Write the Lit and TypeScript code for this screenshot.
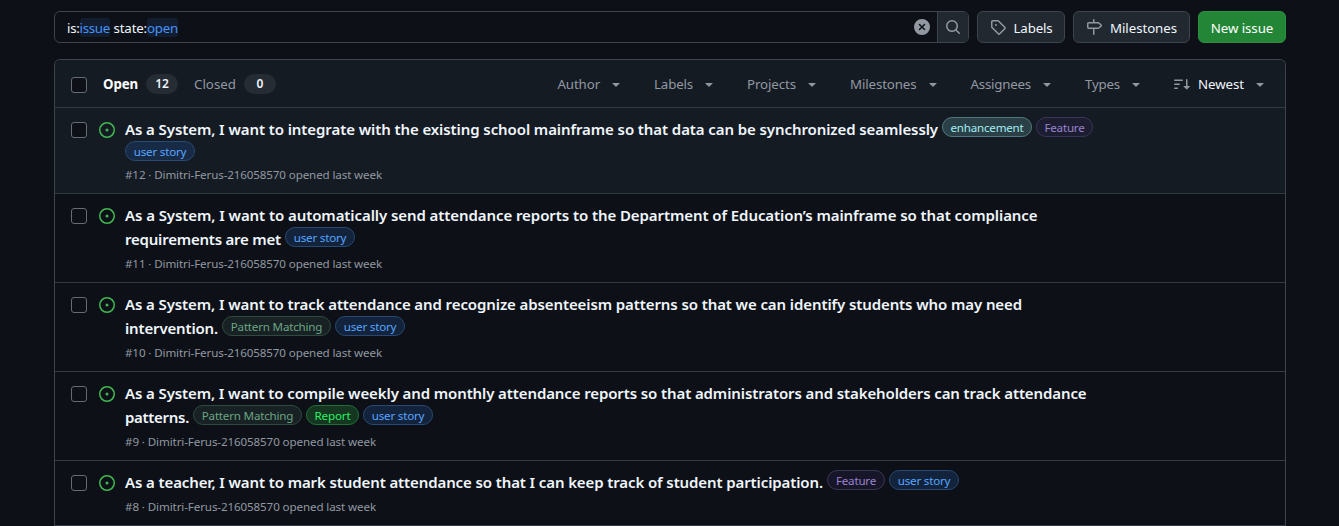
import { LitElement, html, css, svg, nothing } from "lit";
import { customElement, property } from "lit/decorators.js";

const ICONS = {
  tag: svg`<path d="M1 7.775V2.75C1 1.784 1.784 1 2.75 1h5.025c.464 0 .91.184 1.238.513l6.25 6.25a1.75 1.75 0 0 1 0 2.474l-5.026 5.026a1.75 1.75 0 0 1-2.474 0l-6.25-6.25A1.752 1.752 0 0 1 1 7.775Zm1.5 0c0 .066.026.13.073.177l6.25 6.25a.25.25 0 0 0 .354 0l5.025-5.025a.25.25 0 0 0 0-.354l-6.25-6.25a.25.25 0 0 0-.177-.073H2.75a.25.25 0 0 0-.25.25ZM6 5a1 1 0 1 1 0 2 1 1 0 0 1 0-2Z"/>`,
  milestone: svg`<path d="M7.75 0a.75.75 0 0 1 .75.75V3h3.634c.414 0 .814.147 1.13.414l2.07 1.75a1.75 1.75 0 0 1 0 2.672l-2.07 1.75a1.75 1.75 0 0 1-1.13.414H8.5v5.25a.75.75 0 0 1-1.5 0V10H2.75A1.75 1.75 0 0 1 1 8.25v-3.5C1 3.784 1.784 3 2.75 3H7V.75A.75.75 0 0 1 7.75 0Zm4.384 8.5a.25.25 0 0 0 .161-.06l2.07-1.75a.248.248 0 0 0 0-.38l-2.07-1.75a.25.25 0 0 0-.161-.06H2.75a.25.25 0 0 0-.25.25v3.5c0 .138.112.25.25.25h9.384Z"/>`,
  search: svg`<path d="M10.68 11.74a6 6 0 0 1-7.922-8.982 6 6 0 0 1 8.982 7.922l3.04 3.04a.749.749 0 0 1-.326 1.275.749.749 0 0 1-.734-.215ZM11.5 7a4.499 4.499 0 1 0-8.997 0A4.499 4.499 0 0 0 11.5 7Z"/>`,
  clear: svg`<path d="M2.343 13.657A8 8 0 1 1 13.658 2.343 8 8 0 0 1 2.343 13.657ZM6.03 4.97a.751.751 0 0 0-1.042.018.751.751 0 0 0-.018 1.042L6.94 8 4.97 9.97a.749.749 0 0 0 .326 1.275.749.749 0 0 0 .734-.215L8 9.06l1.97 1.97a.749.749 0 0 0 1.275-.326.749.749 0 0 0-.215-.734L9.06 8l1.97-1.97a.749.749 0 0 0-.326-1.275.749.749 0 0 0-.734.215L8 6.94Z"/>`,
  opened: svg`<path d="M8 9.5a1.5 1.5 0 1 0 0-3 1.5 1.5 0 0 0 0 3Z"/><path d="M8 0a8 8 0 1 1 0 16A8 8 0 0 1 8 0ZM1.5 8a6.5 6.5 0 1 0 13 0 6.5 6.5 0 0 0-13 0Z"/>`,
  caret: svg`<path d="m4.427 7.427 3.396 3.396a.25.25 0 0 0 .354 0l3.396-3.396A.25.25 0 0 0 11.396 7H4.604a.25.25 0 0 0-.177.427Z"/>`,
  sort: svg`<path d="M0 4.25a.75.75 0 0 1 .75-.75h7.5a.75.75 0 0 1 0 1.5H.75A.75.75 0 0 1 0 4.25Zm0 4a.75.75 0 0 1 .75-.75h4.5a.75.75 0 0 1 0 1.5H.75A.75.75 0 0 1 0 8.25Zm0 4a.75.75 0 0 1 .75-.75h2.5a.75.75 0 0 1 0 1.5H.75a.75.75 0 0 1-.75-.75Z"/><path d="M13.5 10h2.25a.25.25 0 0 1 .177.427l-3 3a.25.25 0 0 1-.354 0l-3-3A.25.25 0 0 1 9.75 10H12V3.75a.75.75 0 0 1 1.5 0V10Z"/>`,
};

const icon = (name: keyof typeof ICONS, extra = "") =>
  html`<svg class="icon ${extra}" viewBox="0 0 16 16" aria-hidden="true">${ICONS[name]}</svg>`;

/** One line of text whose tracking is adjusted so that it sets to a given width. */
@customElement("fit-text")
class FitText extends LitElement {
  static styles = css`
    :host {
      display: block;
      flex: none;
      white-space: pre;
    }
    .run {
      display: inline-block;
    }
  `;
  @property() text = "";
  @property({ type: Number }) width = 0;

  render() {
    return html`<span class="run">${this.text}</span>`;
  }

  updated() {
    const run = this.renderRoot.querySelector<HTMLElement>(".run")!;
    run.style.letterSpacing = "0px";
    const natural = run.getBoundingClientRect().width;
    run.style.letterSpacing = `${(this.width - natural) / this.text.length}px`;
    this.style.width = `${this.width}px`;
  }
}

const fit = (text: string, width: number) =>
  html`<fit-text .text=${text} .width=${width}></fit-text>`;

interface Label {
  name: string;
  kind: string;
  width: number;
}

interface Line {
  text?: string;
  width?: number;
  labels?: Label[];
}

interface Issue {
  id: number;
  hovered?: boolean;
  metaWidth: number;
  lines: Line[];
}

const story: Label = { name: "user story", kind: "story", width: 52.5 };
const feature: Label = { name: "Feature", kind: "feature", width: 40 };
const pattern: Label = { name: "Pattern Matching", kind: "pattern", width: 91.5 };
const report: Label = { name: "Report", kind: "report", width: 36 };
const enhancement: Label = { name: "enhancement", kind: "enhancement", width: 73 };

const FILTERS: [string, number][] = [
  ["Author", 42.5],
  ["Labels", 39],
  ["Projects", 49],
  ["Milestones", 66.5],
  ["Assignees", 60.5],
  ["Types", 35],
];

const ISSUES: Issue[] = [
  {
    id: 12,
    hovered: true,
    metaWidth: 257,
    lines: [
      {
        text: "As a System, I want to integrate with the existing school mainframe so that data can be synchronized seamlessly",
        width: 813,
        labels: [enhancement, feature],
      },
      { labels: [story] },
    ],
  },
  {
    id: 11,
    metaWidth: 257,
    lines: [
      {
        text: "As a System, I want to automatically send attendance reports to the Department of Education’s mainframe so that compliance",
        width: 912.5,
      },
      { text: "requirements are met", width: 156, labels: [story] },
    ],
  },
  {
    id: 10,
    metaWidth: 257,
    lines: [
      {
        text: "As a System, I want to track attendance and recognize absenteeism patterns so that we can identify students who may need",
        width: 897,
      },
      { text: "intervention.", width: 93, labels: [pattern, story] },
    ],
  },
  {
    id: 9,
    metaWidth: 251,
    lines: [
      {
        text: "As a System, I want to compile weekly and monthly attendance reports so that administrators and stakeholders can track attendance",
        width: 961.5,
      },
      { text: "patterns.", width: 64, labels: [pattern, report, story] },
    ],
  },
  {
    id: 8,
    metaWidth: 251,
    lines: [
      {
        text: "As a teacher, I want to mark student attendance so that I can keep track of student participation.",
        width: 698,
        labels: [feature, story],
      },
    ],
  },
];

@customElement("app-root")
class AppRoot extends LitElement {
  static styles = css`
    :host {
      display: block;
      box-sizing: border-box;
      height: 526px;
      overflow: hidden;
      padding: 11px 53px 0 54px;
      background: #0d1117;
      color: #f0f6fc;
      font: 13.3px/20px "Noto Sans", "Open Sans", sans-serif;
    }
    * {
      box-sizing: border-box;
    }
    .icon {
      display: block;
      flex: none;
      width: 16px;
      height: 16px;
      fill: #9198a1;
    }
    .toolbar {
      display: flex;
      gap: 8px;
      height: 32px;
    }
    .search {
      display: flex;
      flex: 1;
      align-items: center;
      border: 1px solid #3d444d;
      border-radius: 6px;
      overflow: hidden;
    }
    .query {
      display: flex;
      flex: 1;
      padding: 2px 0 0 12px;
    }
    .token {
      margin-top: -1px;
      padding-top: 1px;
      height: 19px;
      line-height: 18px;
      border-radius: 3px;
      background: #121d2f;
      color: #4493f8;
    }
    .query > fit-text {
      line-height: 18px;
    }
    .go {
      display: flex;
      align-items: center;
      justify-content: center;
      width: 31px;
      height: 30px;
      padding-right: 1px;
      margin-left: 7px;
      border-left: 1px solid #3d444d;
      background: #212830;
    }
    .button {
      display: flex;
      align-items: center;
      justify-content: center;
      gap: 8px;
      height: 32px;
      border: 1px solid #3d444d;
      border-radius: 6px;
      background: #212830;
      padding-top: 1px;
    }
    .button .icon {
      margin-top: -2px;
    }
    .w-labels,
    .w-new {
      width: 88px;
    }
    .w-miles {
      width: 117px;
    }
    .w-new {
      border-color: #2f8f41;
      background: #238636;
      color: #fff;
    }
    .list {
      margin-top: 16px;
      border: 1px solid #3d444d;
      border-radius: 6px 6px 0 0;
      border-bottom: 0;
      overflow: hidden;
    }
    .head {
      display: flex;
      align-items: center;
      height: 48px;
      padding: 2px 17px 0 16px;
      border-bottom: 1px solid #343a43;
      background: #151b23;
      color: #9198a1;
    }
    .head fit-text {
      margin-top: -2px;
    }
    .box {
      flex: none;
      width: 16px;
      height: 16px;
      border: 1px solid #656c76;
      border-radius: 3px;
      background: #0d1117;
    }
    .tab {
      display: flex;
      align-items: center;
      gap: 8px;
      margin-left: 16px;
    }
    .tab.current {
      color: #fff;
      font-weight: 700;
    }
    .count {
      width: 32px;
      height: 20px;
      border-radius: 10px;
      background: #262c34;
      color: #f0f6fc;
      font-size: 12px;
      font-weight: 600;
      line-height: 20px;
      text-align: center;
    }
    .head .count {
      margin-top: -2px;
    }
    .filters {
      display: flex;
      gap: 30px;
      margin-left: auto;
    }
    .filter {
      display: flex;
      align-items: center;
      gap: 8px;
    }
    .filter .icon {
      margin-top: -1px;
    }
    .sort {
      color: #f0f6fc;
    }
    .row {
      display: flex;
      padding: 10px 16px 9px;
      border-bottom: 1px solid #343a43;
    }
    .row.hovered {
      background: #151b23;
    }
    .row > .box {
      margin-top: 4px;
    }
    .row > .icon {
      margin: 4px 10px 0 12px;
      fill: #3fb950;
    }
    .line {
      display: flex;
      gap: 4px;
      height: 24px;
      font-size: 15px;
      font-weight: 600;
      line-height: 24px;
    }
    .line > fit-text {
      margin-top: -1px;
    }
    .line.only-labels {
      height: 21px;
    }
    .label {
      display: flex;
      justify-content: center;
      height: 20px;
      margin-top: -1px;
      border: 1px solid;
      border-radius: 10px;
      font-size: 11.6px;
      font-weight: 400;
      line-height: 20px;
    }
    .story {
      width: 70px;
      color: #58a6ff;
      background: #12233b;
      border-color: #274973;
    }
    .hovered .story {
      background: #182b46;
    }
    .feature {
      width: 57px;
      color: #9a82cf;
      background: #171629;
      border-color: #3b3459;
    }
    .hovered .feature {
      background: #1d1d31;
    }
    .row:last-child .feature {
      width: 58px;
    }
    .pattern {
      width: 109px;
      color: #6ba583;
      background: #182123;
      border-color: #2f4a40;
    }
    .report {
      width: 53px;
      color: #2bf263;
      background: #153621;
      border-color: #1d7038;
    }
    .enhancement {
      width: 90px;
      color: #a2eeef;
      background: #2b3f47;
      border-color: #51787e;
    }
    .meta {
      margin-top: 3px;
      height: 18px;
      color: #9198a1;
      font-size: 11.6px;
      line-height: 18px;
    }
  `;

  private row(issue: Issue) {
    return html`<div class="row ${issue.hovered ? "hovered" : ""}">
      <span class="box"></span>
      ${icon("opened")}
      <div>
        ${issue.lines.map(
          (line) => html`<div class="line ${line.text ? "" : "only-labels"}">
            ${line.text ? fit(line.text, line.width!) : nothing}
            ${(line.labels ?? []).map(
              (l) => html`<span class="label ${l.kind}">${fit(l.name, l.width)}</span>`,
            )}
          </div>`,
        )}
        <div class="meta">
          ${fit(`#${issue.id} · Dimitri-Ferus-216058570 opened last week`, issue.metaWidth)}
        </div>
      </div>
    </div>`;
  }

  render() {
    return html`
      <div class="toolbar">
        <div class="search">
          <div class="query">
            ${fit("is:", 12.5)}<span class="token">${fit("issue", 30.5)}</span>${fit(" ", 3.5)}${fit("state:", 33.5)}<span class="token">${fit("open", 31)}</span>
          </div>
          ${icon("clear")}
          <div class="go">${icon("search")}</div>
        </div>
        <div class="button w-labels">${icon("tag")}${fit("Labels", 39)}</div>
        <div class="button w-miles">${icon("milestone")}${fit("Milestones", 67)}</div>
        <div class="button w-new">${fit("New issue", 62.5)}</div>
      </div>
      <div class="list">
        <div class="head">
          <span class="box"></span>
          <div class="tab current">${fit("Open", 35)}<span class="count">12</span></div>
          <div class="tab">${fit("Closed", 42)}<span class="count">0</span></div>
          <div class="filters">
            ${FILTERS.map(
              ([name, width]) => html`<div class="filter">${fit(name, width)}${icon("caret")}</div>`,
            )}
            <div class="filter sort">${icon("sort")}${fit("Newest", 46)}${icon("caret")}</div>
          </div>
        </div>
        ${ISSUES.map((issue) => this.row(issue))}
      </div>
    `;
  }
}
